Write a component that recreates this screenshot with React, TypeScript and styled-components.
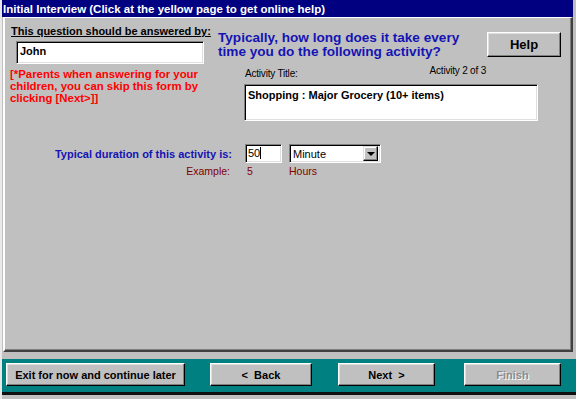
import React from "react";
import styled, { createGlobalStyle } from "styled-components";

const GRAY = "#c0c0c0";
const NAVY = "#000080";
const TEAL = "#008080";
const BLUE = "#1414b4";
const DARK_RED = "#800000";

const GlobalStyle = createGlobalStyle`
  html, body {
    margin: 0;
    padding: 0;
    background: ${GRAY};
  }
  body {
    font-family: "Liberation Sans", Arial, sans-serif;
    font-size: 11px;
  }
`;

const Window = styled.div`
  width: 576px;
  height: 399px;
  box-sizing: border-box;
  display: flex;
  flex-direction: column;
  background: ${GRAY};
  border-left: 2px solid #e8e8e8;
  overflow: hidden;
`;

const TitleBar = styled.div`
  height: 17px;
  margin: 0 3px 0 -2px;
  padding-left: 3px;
  display: flex;
  align-items: center;
  background: ${NAVY};
  color: #fff;
  font-weight: bold;
  font-size: 11.5px;
`;

const Panel = styled.div`
  height: 335px;
  box-sizing: border-box;
  margin: 0 3px 0 1px;
  border-top: 1px solid #fff;
  border-left: 2px solid #fff;
  border-right: 2px solid #404040;
  border-bottom: 2px solid #404040;
  box-shadow: inset -1px -1px #808080;
  display: flex;
  flex-direction: column;
`;

const TopRow = styled.div`
  display: flex;
`;

const LeftCol = styled.div`
  width: 208px;
  padding: 7px 0 0 5px;
  box-sizing: border-box;
`;

const AnsweredLabel = styled.div`
  margin-left: 1px;
  font-weight: bold;
  font-size: 11px;
  line-height: 13px;
  text-decoration: underline;
  white-space: nowrap;
`;

const Sunken = styled.div<{ $w: number; $h: number }>`
  width: ${({ $w }) => $w}px;
  height: ${({ $h }) => $h}px;
  box-sizing: border-box;
  background: #fff;
  border: 1px solid;
  border-color: #808080 #fff #fff #808080;
  box-shadow: inset 1px 1px #000, inset -1px -1px #dfdfdf;
  display: flex;
  align-items: flex-start;
  padding: 3px 0 0 3px;
  font-size: 11px;
  white-space: nowrap;
`;

const NameBox = styled(Sunken)`
  margin: 3px 0 0 6px;
  font-weight: bold;
`;

const RedNote = styled.div`
  margin-top: 4px;
  color: #ff0000;
  font-weight: bold;
  font-size: 11.4px;
  line-height: 12px;
  white-space: nowrap;
`;

const RightCol = styled.div`
  flex: 1;
  padding: 13px 0 0 5px;
  display: flex;
  flex-direction: column;
`;

const HeadRow = styled.div`
  display: flex;
  justify-content: space-between;
`;

const Heading = styled.div`
  display: flex;
  flex-direction: column;
  color: ${BLUE};
  font-weight: bold;
  font-size: 13.6px;
  white-space: nowrap;
`;

const HeadLine = styled.span`
  height: 14px;
  line-height: 13px;
  overflow: visible;
`;

const RaisedButton = styled.button<{ $w: number; $h: number; $disabled?: boolean }>`
  width: ${({ $w }) => $w}px;
  height: ${({ $h }) => $h}px;
  box-sizing: border-box;
  padding: 0;
  background: ${GRAY};
  border: 1px solid;
  border-color: #fff #000 #000 #fff;
  box-shadow: inset -1px -1px #808080, inset 1px 1px #dfdfdf;
  font-family: "Liberation Sans", Arial, sans-serif;
  font-weight: bold;
  color: ${({ $disabled }) => ($disabled ? "#8c8c8c" : "#000")};
  text-shadow: ${({ $disabled }) => ($disabled ? "1px 1px #fff" : "none")};
  display: flex;
  align-items: center;
  justify-content: center;
`;

const HelpButton = styled(RaisedButton)`
  margin: 1px 10px 0 0;
  font-size: 13px;
`;

const ActivityArea = styled.div`
  margin-left: 26px;
  width: 294px;
`;

const ActivityLabels = styled.div`
  width: 242px;
  margin-top: 6px;
  display: flex;
  justify-content: space-between;
  align-items: flex-start;
  font-size: 10px;
  line-height: 12px;
`;

const SmallLabel = styled.span<{ $dy?: number }>`
  margin-top: ${({ $dy }) => $dy ?? 0}px;
  margin-left: ${({ $dy }) => ($dy ? 1 : 0)}px;
  letter-spacing: -0.2px;
`;

const TitleBox = styled(Sunken)`
  margin-top: 4px;
  font-weight: bold;
  padding-top: 4px;
`;

const DurationGrid = styled.div`
  margin-top: 23px;
  display: grid;
  grid-template-columns: 227px 37px 92px;
  column-gap: 13px;
  row-gap: 2px;
  align-items: center;
  & > :nth-child(3n) {
    margin-left: -6px;
  }
`;

const DurationLabel = styled.div`
  text-align: right;
  color: ${BLUE};
  font-weight: bold;
  font-size: 11px;
`;

const NumberBox = styled(Sunken)`
  padding: 2px 0 0 2px;
`;

const Caret = styled.span`
  display: inline-block;
  width: 1px;
  height: 12px;
  background: #000;
`;

const Select = styled(Sunken)`
  padding: 0;
  align-items: center;
  justify-content: space-between;
`;

const SelectText = styled.span`
  padding-left: 3px;
`;

const DropButton = styled.span`
  width: 15px;
  height: 15px;
  margin-right: 2px;
  box-sizing: border-box;
  background: ${GRAY};
  border: 1px solid;
  border-color: #dfdfdf #000 #000 #dfdfdf;
  box-shadow: inset -1px -1px #808080, inset 1px 1px #fff;
  display: flex;
  align-items: center;
  justify-content: center;
`;

const Arrow = styled.span`
  width: 0;
  height: 0;
  border-left: 4px solid transparent;
  border-right: 4px solid transparent;
  border-top: 4px solid #000;
`;

const ExampleText = styled.div<{ $align?: string; $pad?: number }>`
  color: ${DARK_RED};
  font-size: 10.5px;
  text-align: ${({ $align }) => $align ?? "left"};
  padding: 0 ${({ $pad, $align }) => ($align === "right" ? $pad ?? 0 : 0)}px 0
    ${({ $pad, $align }) => ($align === "right" ? 0 : $pad ?? 0)}px;
`;

const Footer = styled.div`
  margin-top: 7px;
  margin-left: -2px;
  height: 36px;
  box-sizing: border-box;
  background: ${TEAL};
  border-bottom: 3px solid #101010;
  display: flex;
  align-items: center;
  padding: 0 0 2px 6px;
`;

const FooterButton = styled(RaisedButton)<{ $ml?: number }>`
  margin-left: ${({ $ml }) => $ml ?? 0}px;
  font-size: 11px;
`;

export default function App() {
  return (
    <>
      <GlobalStyle />
      <Window>
        <TitleBar>Initial Interview (Click at the yellow page to get online help)</TitleBar>
        <Panel>
          <TopRow>
            <LeftCol>
              <AnsweredLabel>This question should be answered by:</AnsweredLabel>
              <NameBox $w={188} $h={23}>John</NameBox>
              <RedNote>
                [*Parents when answering for your
                <br />
                children, you can skip this form by
                <br />
                clicking [Next&gt;]]
              </RedNote>
            </LeftCol>
            <RightCol>
              <HeadRow>
                <Heading>
                  <HeadLine>Typically, how long does it take every</HeadLine>
                  <HeadLine>time you do the following activity?</HeadLine>
                </Heading>
                <HelpButton $w={74} $h={25}>Help</HelpButton>
              </HeadRow>
              <ActivityArea>
                <ActivityLabels>
                  <SmallLabel $dy={3}>Activity Title:</SmallLabel>
                  <SmallLabel>Activity 2 of 3</SmallLabel>
                </ActivityLabels>
                <TitleBox $w={294} $h={37}>Shopping : Major Grocery (10+ items)</TitleBox>
              </ActivityArea>
            </RightCol>
          </TopRow>
          <DurationGrid>
            <DurationLabel>Typical duration of this activity is:</DurationLabel>
            <NumberBox $w={37} $h={19}>
              50
              <Caret />
            </NumberBox>
            <Select $w={92} $h={19}>
              <SelectText>Minute</SelectText>
              <DropButton>
                <Arrow />
              </DropButton>
            </Select>
            <ExampleText $align="right" $pad={2}>Example:</ExampleText>
            <ExampleText $pad={2}>5</ExampleText>
            <ExampleText>Hours</ExampleText>
          </DurationGrid>
        </Panel>
        <Footer>
          <FooterButton $w={179} $h={23}>Exit for now and continue later</FooterButton>
          <FooterButton $w={102} $h={23} $ml={25}>&lt; &nbsp;Back</FooterButton>
          <FooterButton $w={97} $h={23} $ml={26}>Next &nbsp;&gt;</FooterButton>
          <FooterButton $w={97} $h={23} $ml={29} $disabled>Finish</FooterButton>
        </Footer>
      </Window>
    </>
  );
}
